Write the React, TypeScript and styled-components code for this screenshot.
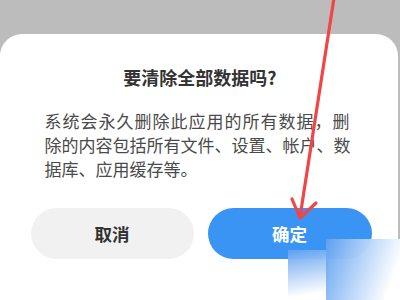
import React from "react";
import styled, { createGlobalStyle } from "styled-components";

const Global = createGlobalStyle`
  html, body { margin: 0; padding: 0; }
  body {
    width: 400px;
    height: 300px;
    overflow: hidden;
    background: #bcbcbc;
    font-family: "Noto Sans CJK SC", "Noto Sans", sans-serif;
  }
`;

const Screen = styled.div`
  position: relative;
  width: 400px;
  height: 300px;
  display: flex;
  flex-direction: column;
`;

const Sheet = styled.div`
  margin-top: 34px;
  width: 398px;
  flex: 1;
  background: #ffffff;
  border-radius: 22px 22px 0 0;
  display: flex;
  flex-direction: column;
  align-items: center;
  padding-top: 31px;
  box-sizing: border-box;
`;

const Title = styled.div`
  font-size: 18px;
  line-height: 24px;
  font-weight: 700;
  color: #333333;
  padding-left: 2px;
`;

const Body = styled.div`
  margin-top: 20px;
  width: 305px;
  margin-right: 4px;
  font-size: 17px;
  line-height: 24px;
  color: #4a4a4a;
`;

const Line = styled.div<{ $justify?: boolean }>`
  text-align: ${(p) => (p.$justify ? "justify" : "left")};
  text-align-last: ${(p) => (p.$justify ? "justify" : "left")};
  white-space: nowrap;
`;

const Actions = styled.div`
  margin-top: 27px;
  display: flex;
  gap: 14px;
  margin-left: 4px;
`;

const Button = styled.div<{ $primary?: boolean }>`
  width: ${(p) => (p.$primary ? 164 : 163)}px;
  height: 51px;
  border-radius: 26px;
  background: ${(p) => (p.$primary ? "#3a94f4" : "#f1f1f1")};
  color: ${(p) => (p.$primary ? "#ffffff" : "#333333")};
  font-size: 17.5px;
  font-weight: 700;
  display: flex;
  align-items: center;
  justify-content: center;
`;

const Overlay = styled.svg`
  position: absolute;
  left: 0;
  top: 0;
  pointer-events: none;
`;

const Glow = styled.div<{ $l: number; $t: number; $w: number; $h: number; $dir: string }>`
  position: absolute;
  left: ${(p) => p.$l}px;
  top: ${(p) => p.$t}px;
  width: ${(p) => p.$w}px;
  height: ${(p) => p.$h}px;
  background: linear-gradient(${(p) => p.$dir}, rgba(95, 160, 240, 0.95), rgba(255, 255, 255, 1) 85%);
`;

export default function App() {
  return (
    <Screen>
      <Global />
      <Sheet>
        <Title>要清除全部数据吗?</Title>
        <Body>
          <Line $justify>系统会永久删除此应用的所有数据，删</Line>
          <Line $justify>除的内容包括所有文件、设置、帐户、数</Line>
          <Line>据库、应用缓存等。</Line>
        </Body>
        <Actions>
          <Button>取消</Button>
          <Button $primary>确定</Button>
        </Actions>
      </Sheet>
      <Glow $l={288} $t={250} $w={40} $h={50} $dir="170deg" />
      <Glow $l={326} $t={239} $w={74} $h={61} $dir="110deg" />
      <Overlay width="400" height="300" viewBox="0 0 400 300">
        <g stroke="#f24545" strokeWidth="3.2" strokeLinecap="round" fill="none">
          <line x1="334" y1="-2" x2="300" y2="217" />
          <polyline points="292,199 300,218 316,203" strokeLinejoin="round" />
        </g>
      </Overlay>
    </Screen>
  );
}
